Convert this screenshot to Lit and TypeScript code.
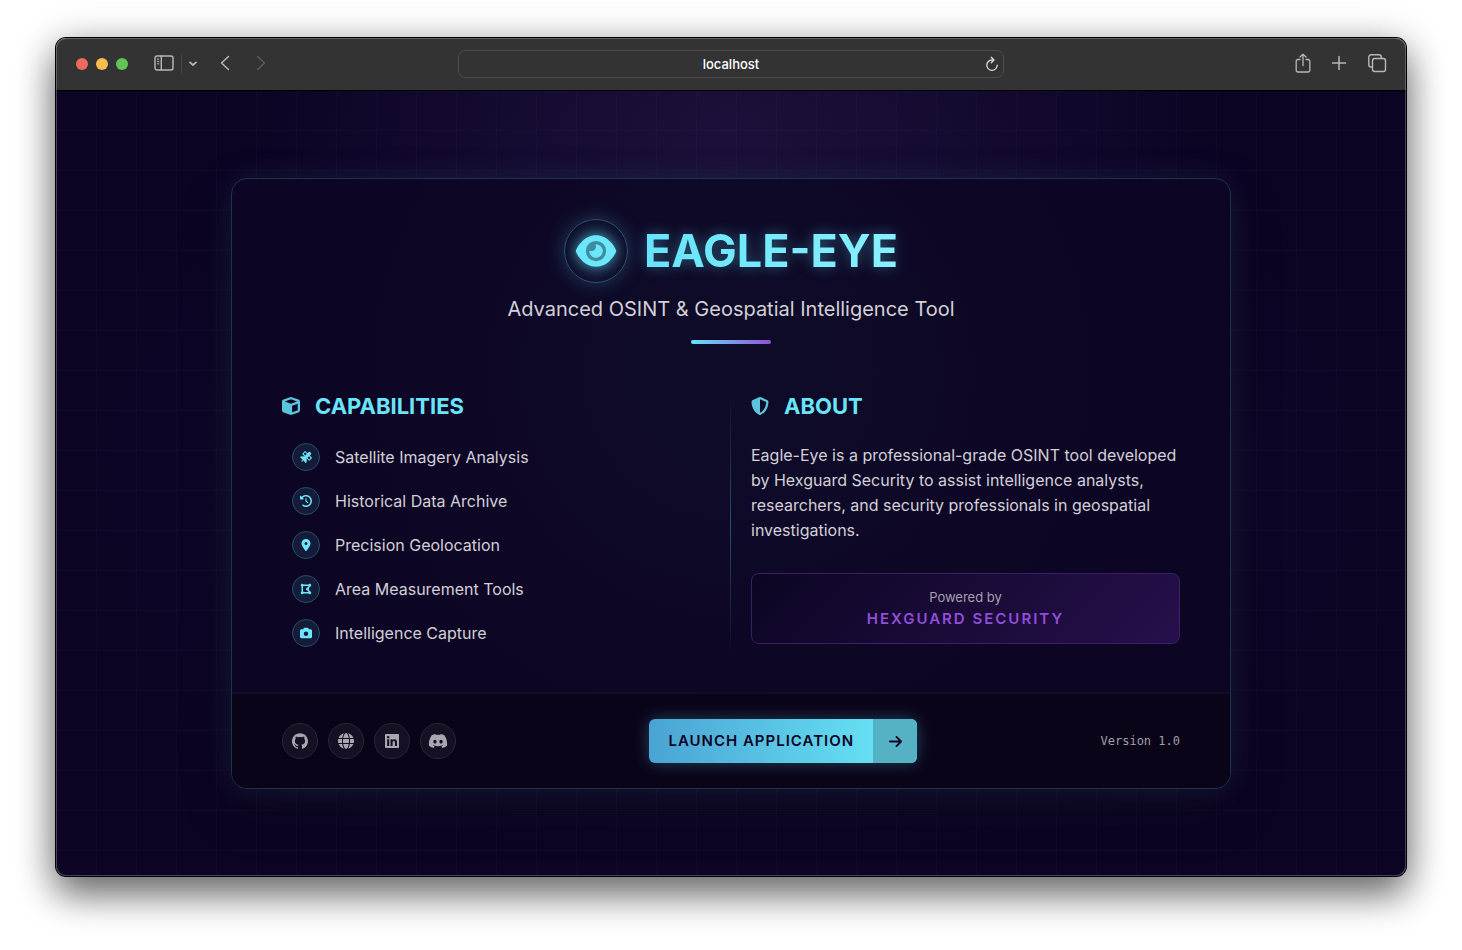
import { LitElement, html, css, svg } from "lit";
import { customElement, property } from "lit/decorators.js";

type Glyph = { box: string; path: string };

const ICONS: Record<string, Glyph> = {
  cube: {
    box: "0 0 512 512",
    path: "M234.5 5.7c13.9-5 29.1-5 43.1 0l192 68.6C495 83.4 512 107.5 512 134.6l0 242.9c0 27-17 51.2-42.5 60.3l-192 68.6c-13.9 5-29.1 5-43.1 0l-192-68.6C17 428.6 0 404.5 0 377.4L0 134.6c0-27 17-51.2 42.5-60.3l192-68.6zM256 66L82.3 128 256 190l173.7-62L256 66zm32 368.6l160-57.1 0-188L288 246.6l0 188z",
  },
  shield: {
    box: "0 0 512 512",
    path: "M256 0c4.6 0 9.2 1 13.4 2.9L457.7 82.8c22 9.3 38.4 31 38.3 57.2c-.5 99.2-41.3 280.7-213.6 363.2c-16.7 8-36.1 8-52.8 0C57.3 420.7 16.5 239.2 16 140c-.1-26.2 16.3-47.9 38.3-57.2L242.7 2.9C246.8 1 251.4 0 256 0zm0 66.8l0 378.1C394 378 431.1 230.1 432 141.4L256 66.8z",
  },
  satellite: {
    box: "0 0 512 512",
    path: "M233 7c-9.4-9.4-24.6-9.4-33.9 0l-96 96c-9.4 9.4-9.4 24.6 0 33.9l89.4 89.4-15.5 15.5C152.3 230.4 124.9 224 96 224c-31.7 0-61.5 7.7-87.8 21.2c-9 4.7-10.3 16.7-3.1 23.8L112.7 376.7 96.3 393.1c-2.6-.7-5.4-1.1-8.3-1.1c-17.7 0-32 14.3-32 32s14.3 32 32 32s32-14.3 32-32c0-2.9-.4-5.6-1.1-8.3l16.4-16.4L242.9 506.9c7.2 7.2 19.2 5.9 23.8-3.1C280.3 477.5 288 447.7 288 416c0-28.9-6.4-56.3-17.8-80.9l15.5-15.5L375 409c9.4 9.4 24.6 9.4 33.9 0l96-96c9.4-9.4 9.4-24.6 0-33.9l-89.4-89.4 55-55c12.5-12.5 12.5-32.8 0-45.3l-48-48c-12.5-12.5-32.8-12.5-45.3 0l-55 55L233 7zm159 351l-72.4-72.4 62.1-62.1L454.1 296 392 358.1zM226.3 192.4L153.9 120 216 57.9l72.4 72.4-62.1 62.1z",
  },
  history: {
    box: "0 0 512 512",
    path: "M75 75L41 41C25.9 25.9 0 36.6 0 57.9L0 168c0 13.3 10.7 24 24 24l110.1 0c21.4 0 32.1-25.9 17-41l-30.8-30.8C155 85.5 203 64 256 64c106 0 192 86 192 192s-86 192-192 192c-40.8 0-78.6-12.7-109.7-34.4c-14.5-10.1-34.4-6.6-44.6 7.9s-6.6 34.4 7.9 44.6C151.2 495 201.7 512 256 512c141.4 0 256-114.6 256-256S397.4 0 256 0C185.3 0 121.3 28.7 75 75zm181 53c-13.3 0-24 10.7-24 24l0 104c0 6.4 2.5 12.5 7 17l72 72c9.4 9.4 24.6 9.4 33.9 0s9.4-24.6 0-33.9l-65-65 0-94.1c0-13.3-10.7-24-24-24z",
  },
  pin: {
    box: "-64 0 512 512",
    path: "M215.7 499.2C267 435 384 279.4 384 192C384 86 298 0 192 0S0 86 0 192c0 87.4 117 243 168.3 307.2c12.3 15.3 35.1 15.3 47.4 0zM192 128a64 64 0 1 1 0 128 64 64 0 1 1 0-128z",
  },
  polygon: {
    box: "-32 0 512 512",
    path: "M96 151.4l0 209.1c9.7 5.6 17.8 13.7 23.4 23.4l209.1 0c0-.1 .1-.2 .1-.3l-4.5-7.9-32-56 0 0c-1.4 .1-2.8 .1-4.2 .1c-35.3 0-64-28.7-64-64s28.7-64 64-64c1.4 0 2.8 0 4.2 .1l0 0 32-56 4.5-7.9-.1-.3-209.1 0c-5.6 9.7-13.7 17.8-23.4 23.4zM384.3 352c35.2 .2 63.7 28.7 63.7 64c0 35.3-28.7 64-64 64c-23.7 0-44.4-12.9-55.4-32l-209.1 0c-11.1 19.1-31.7 32-55.4 32c-35.3 0-64-28.7-64-64c0-23.7 12.9-44.4 32-55.4l0-209.1C12.9 140.4 0 119.7 0 96C0 60.7 28.7 32 64 32c23.7 0 44.4 12.9 55.4 32l209.1 0c11.1-19.1 31.7-32 55.4-32c35.3 0 64 28.7 64 64c0 35.3-28.5 63.8-63.7 64l-4.5 7.9-32 56-2.3 4c4.2 8.5 6.5 18 6.5 28.1s-2.3 19.6-6.5 28.1l2.3 4 32 56 4.5 7.9z",
  },
  camera: {
    box: "0 0 512 512",
    path: "M149.1 64.8L138.7 96 64 96C28.7 96 0 124.7 0 160L0 416c0 35.3 28.7 64 64 64l384 0c35.3 0 64-28.7 64-64l0-256c0-35.3-28.7-64-64-64l-74.7 0L362.9 64.8C356.4 45.2 338.1 32 317.4 32L194.6 32c-20.7 0-39 13.2-45.5 32.8zM256 192a96 96 0 1 1 0 192 96 96 0 1 1 0-192z",
  },
  arrow: {
    box: "0 32 448 448",
    path: "M438.6 278.6c12.5-12.5 12.5-32.8 0-45.3l-160-160c-12.5-12.5-32.8-12.5-45.3 0s-12.5 32.8 0 45.3L338.8 224 32 224c-17.7 0-32 14.3-32 32s14.3 32 32 32l306.7 0L233.4 393.4c-12.5 12.5-12.5 32.8 0 45.3s32.8 12.5 45.3 0l160-160z",
  },
  github: {
    box: "0 0 24 24",
    path: "M12 .297c-6.63 0-12 5.373-12 12 0 5.303 3.438 9.8 8.205 11.385.6.113.82-.258.82-.577 0-.285-.01-1.04-.015-2.04-3.338.724-4.042-1.61-4.042-1.61C4.422 18.07 3.633 17.7 3.633 17.7c-1.087-.744.084-.729.084-.729 1.205.084 1.838 1.236 1.838 1.236 1.07 1.835 2.809 1.305 3.495.998.108-.776.417-1.305.76-1.605-2.665-.3-5.466-1.332-5.466-5.93 0-1.31.465-2.38 1.235-3.22-.135-.303-.54-1.523.105-3.176 0 0 1.005-.322 3.3 1.23.96-.267 1.98-.399 3-.405 1.02.006 2.04.138 3 .405 2.28-1.552 3.285-1.23 3.285-1.23.645 1.653.24 2.873.12 3.176.765.84 1.23 1.91 1.23 3.22 0 4.61-2.805 5.625-5.475 5.92.42.36.81 1.096.81 2.22 0 1.606-.015 2.896-.015 3.286 0 .315.21.69.825.57C20.565 22.092 24 17.592 24 12.297c0-6.627-5.373-12-12-12",
  },
  globe: {
    box: "0 0 512 512",
    path: "M352 256c0 22.2-1.2 43.6-3.3 64l-185.3 0c-2.2-20.4-3.3-41.8-3.3-64s1.2-43.6 3.3-64l185.3 0c2.2 20.4 3.3 41.8 3.3 64zm28.8-64l123.1 0c5.3 20.5 8.1 41.9 8.1 64s-2.8 43.5-8.1 64l-123.1 0c2.1-20.6 3.2-42 3.2-64s-1.1-43.4-3.2-64zm112.6-32l-116.7 0c-10-63.9-29.8-117.4-55.3-151.6c78.3 20.7 142 77.5 171.9 151.6zm-149.1 0l-176.6 0c6.1-36.4 15.5-68.6 27-94.7c10.5-23.6 22.2-40.7 33.5-51.5C239.4 3.2 248.7 0 256 0s16.6 3.2 27.8 13.8c11.3 10.8 23 27.9 33.5 51.5c11.6 26 20.9 58.2 27 94.7zm-209 0L18.6 160C48.6 85.9 112.2 29.1 190.6 8.4C165.1 42.6 145.3 96.1 135.3 160zM8.1 192l123.1 0c-2.1 20.6-3.2 42-3.2 64s1.1 43.4 3.2 64L8.1 320C2.8 299.5 0 278.1 0 256s2.8-43.5 8.1-64zM194.7 446.6c-11.6-26-20.9-58.2-27-94.6l176.6 0c-6.1 36.4-15.5 68.6-27 94.6c-10.5 23.6-22.2 40.7-33.5 51.5C272.6 508.8 263.3 512 256 512s-16.6-3.2-27.8-13.8c-11.3-10.8-23-27.9-33.5-51.5zM135.3 352c10 63.9 29.8 117.4 55.3 151.6C112.2 482.9 48.6 426.1 18.6 352l116.7 0zm358.1 0c-30 74.1-93.6 130.9-171.9 151.6c25.5-34.2 45.2-87.7 55.3-151.6l116.7 0z",
  },
  linkedin: {
    box: "-32 0 512 512",
    path: "M416 32H31.9C14.3 32 0 46.5 0 64.3v383.4C0 465.5 14.3 480 31.9 480H416c17.6 0 32-14.5 32-32.3V64.3c0-17.8-14.4-32.3-32-32.3zM135.4 416H69V202.2h66.5V416zm-33.2-243c-21.3 0-38.5-17.3-38.5-38.5S80.9 96 102.2 96c21.2 0 38.5 17.3 38.5 38.5 0 21.3-17.2 38.5-38.5 38.5zm282.1 243h-66.4V312c0-24.8-.5-56.7-34.5-56.7-34.6 0-39.9 27-39.9 54.9V416h-66.4V202.2h63.7v29.2h.9c8.9-16.8 30.6-34.5 62.9-34.5 67.2 0 79.7 44.3 79.7 101.9V416z",
  },
  discord: {
    box: "1.5 1.5 21 21",
    path: "M20.317 4.3698a19.7913 19.7913 0 00-4.8851-1.5152.0741.0741 0 00-.0785.0371c-.211.3753-.4447.8648-.6083 1.2495-1.8447-.2762-3.68-.2762-5.4868 0-.1636-.3933-.4058-.8742-.6177-1.2495a.077.077 0 00-.0785-.037 19.7363 19.7363 0 00-4.8852 1.515.0699.0699 0 00-.0321.0277C.5334 9.0458-.319 13.5799.0992 18.0578a.0824.0824 0 00.0312.0561c2.0528 1.5076 4.0413 2.4228 5.9929 3.0294a.0777.0777 0 00.0842-.0276c.4616-.6304.8731-1.2952 1.226-1.9942a.076.076 0 00-.0416-.1057c-.6528-.2476-1.2743-.5495-1.8722-.8923a.077.077 0 01-.0076-.1277c.1258-.0943.2517-.1923.3718-.2914a.0743.0743 0 01.0776-.0105c3.9278 1.7933 8.18 1.7933 12.0614 0a.0739.0739 0 01.0785.0095c.1202.099.246.1981.3728.2924a.077.077 0 01-.0066.1276 12.2986 12.2986 0 01-1.873.8914.0766.0766 0 00-.0407.1067c.3604.698.7719 1.3628 1.225 1.9932a.076.076 0 00.0842.0286c1.961-.6067 3.9495-1.5219 6.0023-3.0294a.077.077 0 00.0313-.0552c.5004-5.177-.8382-9.6739-3.5485-13.6604a.061.061 0 00-.0312-.0286zM8.02 15.3312c-1.1825 0-2.1569-1.0857-2.1569-2.419 0-1.3332.9555-2.4189 2.157-2.4189 1.2108 0 2.1757 1.0952 2.1568 2.419 0 1.3332-.9555 2.4189-2.1569 2.4189zm7.9748 0c-1.1825 0-2.1569-1.0857-2.1569-2.419 0-1.3332.9554-2.4189 2.1569-2.4189 1.2108 0 2.1757 1.0952 2.1568 2.419 0 1.3332-.946 2.4189-2.1568 2.4189Z",
  },
};

@customElement("ui-icon")
class UiIcon extends LitElement {
  @property() name = "cube";

  static styles = css`
    :host {
      display: block;
      width: 16px;
      height: 16px;
    }
    .glyph {
      display: block;
      width: 100%;
      height: 100%;
      fill: currentColor;
      overflow: visible;
    }
  `;

  render() {
    const icon = ICONS[this.name];
    return html`<svg class="glyph" viewBox=${icon.box} aria-hidden="true">
      ${svg`<path d=${icon.path}></path>`}
    </svg>`;
  }
}

@customElement("browser-toolbar")
class BrowserToolbar extends LitElement {
  static styles = css`
    :host {
      display: block;
      background: #333333;
      color: #b8b8b8;
    }
    .bar {
      display: grid;
      grid-template-columns: 1fr minmax(160px, 546px) 1fr;
      align-items: center;
      height: 52px;
      padding: 0 19px;
    }
    .side {
      display: flex;
      align-items: center;
    }
    .lights {
      display: flex;
      gap: 8px;
      margin: 0 26px 0 1px;
    }
    .light {
      width: 12px;
      height: 12px;
      border-radius: 50%;
    }
    .close {
      background: #ed6a5e;
    }
    .minimise {
      background: #f5bf4f;
    }
    .zoom {
      background: #61c554;
    }
    button {
      display: block;
      padding: 0;
      border: 0;
      background: none;
      color: inherit;
    }
    .side button {
      padding-bottom: 2px;
    }
    svg {
      display: block;
      fill: none;
      stroke: currentColor;
      stroke-linecap: round;
      stroke-linejoin: round;
    }
    .rule {
      width: 1px;
      height: 18px;
      margin: 0 7px;
      background: #474747;
    }
    .back {
      margin: 0 26px 0 23px;
    }
    .forward {
      color: #5d5d5d;
    }
    .address {
      display: flex;
      align-items: center;
      height: 26px;
      padding: 0 4px 0 18px;
      border: 1px solid #4c4c4c;
      border-radius: 7px;
      color: #dddddd;
    }
    .address input {
      flex: 1;
      min-width: 0;
      height: 26px;
      padding: 0;
      border: 0;
      outline: 0;
      background: none;
      color: #ffffff;
      font: 500 13px "Inter", sans-serif;
      text-align: center;
    }
    .end {
      justify-content: flex-end;
      gap: 20px;
    }
  `;

  render() {
    return html`<div class="bar">
      <div class="side">
        <div class="lights">
          <span class="light close"></span>
          <span class="light minimise"></span>
          <span class="light zoom"></span>
        </div>
        <button aria-label="Sidebar">
          <svg width="20" height="16" viewBox="0 0 20 16" stroke-width="1.4">
            <rect x="1" y="1" width="18" height="14" rx="2"></rect>
            <path d="M7.3 1v14"></path>
            <path d="M3.3 4h1.6M3.3 6.4h1.6M3.3 8.8h1.6" stroke-width="1"></path>
          </svg>
        </button>
        <span class="rule"></span>
        <button aria-label="Tab groups">
          <svg width="8" height="6" viewBox="0 0 8 6" stroke-width="1.7">
            <path d="M1 2.4l3 2.6 3-2.6"></path>
          </svg>
        </button>
        <button class="back" aria-label="Back">
          <svg width="10" height="16" viewBox="0 0 10 16" stroke-width="1.5">
            <path d="M8.5 1.500L1.500 8l7 6.500"></path>
          </svg>
        </button>
        <button class="forward" aria-label="Forward">
          <svg width="10" height="16" viewBox="0 0 10 16" stroke-width="1.5">
            <path d="M1.5 1.5l7 6.5-7 6.5"></path>
          </svg>
        </button>
      </div>
      <div class="address">
        <input type="text" aria-label="Address" .value=${"localhost"} />
        <button aria-label="Reload">
          <svg width="14" height="16" viewBox="0 0 14 16" stroke-width="1.3">
            <path d="M8.2 4H7a5.2 5.2 0 1 0 5.2 5.2"></path>
            <path d="M6.3 1.2L9 4 6.3 6.8"></path>
          </svg>
        </button>
      </div>
      <div class="side end">
        <button aria-label="Share">
          <svg width="16" height="20" viewBox="0 0 16 20" stroke-width="1.3">
            <path d="M5 6.5H3A1.7 1.7 0 0 0 1.2 8.2v9A1.7 1.7 0 0 0 3 19h10a1.7 1.7 0 0 0 1.8-1.8v-9A1.7 1.7 0 0 0 13 6.5h-2"></path>
            <path d="M8 12.5V1.3M5 4l3-2.9L11 4"></path>
          </svg>
        </button>
        <button aria-label="New tab">
          <svg width="16" height="16" viewBox="0 0 16 16" stroke-width="1.5">
            <path d="M8 1.5v13M1.5 8h13"></path>
          </svg>
        </button>
        <button aria-label="Tab overview">
          <svg width="20" height="20" viewBox="0 0 20 20" stroke-width="1.4">
            <rect x="5.5" y="5.5" width="13" height="13" rx="2.2"></rect>
            <path d="M5.5 14H4a2.2 2.2 0 0 1-2.2-2.2V4A2.2 2.2 0 0 1 4 1.8h8A2.2 2.2 0 0 1 14.2 4v1.5"></path>
          </svg>
        </button>
      </div>
    </div>`;
  }
}

const CAPABILITIES = [
  { icon: "satellite", label: "Satellite Imagery Analysis" },
  { icon: "history", label: "Historical Data Archive" },
  { icon: "pin", label: "Precision Geolocation" },
  { icon: "polygon", label: "Area Measurement Tools" },
  { icon: "camera", label: "Intelligence Capture" },
];

const SOCIAL = [
  { icon: "github", label: "GitHub" },
  { icon: "globe", label: "Website" },
  { icon: "linkedin", label: "LinkedIn" },
  { icon: "discord", label: "Discord" },
];

@customElement("welcome-card")
class WelcomeCard extends LitElement {
  static styles = css`
    :host {
      display: block;
      box-sizing: border-box;
      width: 100%;
      max-width: 1000px;
      overflow: hidden;
      border: 1px solid #1c3350;
      border-radius: 16px;
      background: radial-gradient(
          circle at 50% 32%,
          rgba(20, 42, 62, 0.2),
          rgba(20, 30, 60, 0) 380px
        ),
        #0d0524;
      box-shadow: 0 0 30px rgba(85, 215, 240, 0.1), 0 20px 50px rgba(12, 12, 16, 0.3);
      font-family: "Inter", sans-serif;
      color: #d3d0d8;
    }
    h1,
    h2,
    p,
    ul {
      margin: 0;
      padding: 0;
    }
    header {
      display: flex;
      flex-direction: column;
      align-items: center;
      padding: 40px 50px 0;
    }
    .brand {
      display: flex;
      align-items: center;
      gap: 16px;
    }
    .emblem {
      display: grid;
      place-items: center;
      box-sizing: border-box;
      width: 64px;
      height: 64px;
      border: 1px solid #2c5670;
      border-radius: 50%;
      background: radial-gradient(circle, rgba(80, 210, 235, 0.3), rgba(80, 210, 235, 0.03) 70%);
      box-shadow: 0 0 20px rgba(90, 220, 245, 0.25);
    }
    .eye {
      display: block;
      width: 42px;
      height: 36px;
      fill: #6be6fb;
      filter: drop-shadow(0 0 6px rgba(90, 220, 245, 0.6));
    }
    .iris {
      fill: #3f8ba0;
    }
    h1 {
      font-size: 45px;
      line-height: 54px;
      font-weight: 700;
      background: linear-gradient(90deg, #67e4fa, #88f1ff);
      -webkit-background-clip: text;
      background-clip: text;
      color: transparent;
      filter: drop-shadow(0 0 7px rgba(90, 220, 245, 0.4));
    }
    .tagline {
      margin-top: 12px;
      font-size: 20px;
      line-height: 28px;
      text-align: center;
    }
    .accent {
      width: 80px;
      height: 4px;
      margin-top: 17px;
      border-radius: 2px;
      background: linear-gradient(90deg, #66e5fa, #944fd9);
    }
    .columns {
      display: grid;
      grid-template-columns: 1fr 20px 1fr;
      column-gap: 10px;
      padding: 48px 50px 35px;
    }
    h2 {
      display: flex;
      align-items: center;
      gap: 15px;
      font-size: 22px;
      line-height: 28px;
      font-weight: 700;
      color: #69e5fa;
    }
    h2 ui-icon {
      width: 18px;
      height: 18px;
      opacity: 0.85;
    }
    .list {
      display: grid;
      gap: 16px;
      margin: 23px 0 10px 10px;
      list-style: none;
    }
    .item {
      display: flex;
      align-items: center;
      gap: 15px;
      font-size: 16px;
      line-height: 24px;
    }
    .badge {
      display: grid;
      place-items: center;
      box-sizing: border-box;
      width: 28px;
      height: 28px;
      border: 1px solid #28506a;
      border-radius: 50%;
      background: #141c3a;
      color: #6be6fb;
    }
    .badge ui-icon {
      width: 12px;
      height: 12px;
    }
    .divider {
      width: 1px;
      margin-left: 9px;
      background: linear-gradient(rgba(70, 190, 215, 0), rgba(70, 190, 215, 0.4), rgba(70, 190, 215, 0));
    }
    .copy {
      margin-top: 23px;
      font-size: 16px;
      line-height: 25px;
    }
    .powered {
      margin-top: 30px;
      padding: 13px 16px 12px;
      border: 1px solid #3b2068;
      border-radius: 8px;
      background: linear-gradient(135deg, #0d0523, #26104c);
      text-align: center;
    }
    .small {
      font-size: 13px;
      line-height: 20px;
      color: #a6a1ae;
    }
    .company {
      font-size: 15px;
      line-height: 24px;
      font-weight: 600;
      letter-spacing: 2px;
      color: #924ed8;
    }
    footer {
      display: flex;
      align-items: center;
      justify-content: space-between;
      padding: 25px 50px;
      border-top: 2px solid #100c2a;
      background: #0a0419;
    }
    .social {
      display: flex;
      gap: 10px;
      padding-right: 10px;
    }
    .social a {
      display: grid;
      place-items: center;
      box-sizing: border-box;
      width: 36px;
      height: 36px;
      border: 1px solid #2c2636;
      border-radius: 50%;
      background: #170f24;
      color: #aaa6b0;
    }
    .social a:last-child ui-icon {
      width: 18px;
    }
    .launch {
      display: flex;
      height: 44px;
      padding: 0;
      overflow: hidden;
      border: 0;
      border-radius: 6px;
      background: linear-gradient(90deg, #4aa3d3, #65dff3 84%);
      box-shadow: 0 0 16px rgba(90, 215, 240, 0.3);
      color: #0d0523;
      font: 600 15px "Inter", sans-serif;
      letter-spacing: 1px;
    }
    .label {
      padding: 0 19px;
      line-height: 44px;
    }
    .go {
      display: grid;
      place-items: center;
      width: 44px;
      height: 44px;
      background: #54b2c4;
    }
    .go ui-icon {
      width: 13px;
      height: 13px;
    }
    .version {
      font-family: "DejaVu Sans Mono", monospace;
      font-size: 12px;
      color: #a29eaa;
    }
  `;

  render() {
    return html`
      <header>
        <div class="brand">
          <div class="emblem">
            <svg class="eye" viewBox="0 0 576 512" aria-hidden="true">
              <circle class="iris" cx="288" cy="256" r="150"></circle>
              <path
                d="M288 32c-80.8 0-145.5 36.8-192.6 80.6C48.6 156 17.3 208 2.5 243.7c-3.3 7.9-3.3 16.7 0 24.6C17.3 304 48.6 356 95.4 399.4C142.5 443.2 207.2 480 288 480s145.5-36.8 192.6-80.6c46.8-43.5 78.1-95.4 93-131.1c3.3-7.9 3.3-16.7 0-24.6c-14.9-35.7-46.2-87.7-93-131.1C433.5 68.8 368.8 32 288 32zM144 256a144 144 0 1 1 288 0 144 144 0 1 1 -288 0zm144-64c0 35.3-28.7 64-64 64c-7.1 0-13.9-1.2-20.3-3.3c-5.5-1.8-11.9 1.6-11.7 7.4c.3 6.9 1.3 13.8 3.2 20.7c13.7 51.2 66.4 81.6 117.6 67.9s81.6-66.4 67.9-117.6c-11.1-41.5-47.8-69.4-88.6-71.1c-5.8-.2-9.2 6.1-7.4 11.7c2.1 6.4 3.3 13.2 3.3 20.3z"
              ></path>
            </svg>
          </div>
          <h1>EAGLE-EYE</h1>
        </div>
        <p class="tagline">Advanced OSINT &amp; Geospatial Intelligence Tool</p>
        <div class="accent"></div>
      </header>
      <div class="columns">
        <section>
          <h2><ui-icon name="cube"></ui-icon>CAPABILITIES</h2>
          <ul class="list">
            ${CAPABILITIES.map(
              (c) => html`<li class="item">
                <span class="badge"><ui-icon name=${c.icon}></ui-icon></span>${c.label}
              </li>`
            )}
          </ul>
        </section>
        <div class="divider"></div>
        <section>
          <h2><ui-icon name="shield"></ui-icon>ABOUT</h2>
          <p class="copy">
            Eagle-Eye is a professional-grade OSINT tool developed by Hexguard Security to assist
            intelligence analysts, researchers, and security professionals in geospatial
            investigations.
          </p>
          <div class="powered">
            <p class="small">Powered by</p>
            <p class="company">HEXGUARD SECURITY</p>
          </div>
        </section>
      </div>
      <footer>
        <nav class="social">
          ${SOCIAL.map(
            (s) => html`<a href="#" aria-label=${s.label}><ui-icon name=${s.icon}></ui-icon></a>`
          )}
        </nav>
        <button class="launch">
          <span class="label">LAUNCH APPLICATION</span>
          <span class="go"><ui-icon name="arrow"></ui-icon></span>
        </button>
        <span class="version">Version 1.0</span>
      </footer>
    `;
  }
}

@customElement("app-root")
class AppRoot extends LitElement {
  static styles = css`
    :host {
      display: flex;
      box-sizing: border-box;
      min-height: 100vh;
      padding: 38px 56px 74px;
      overflow: hidden;
      background: #ffffff;
    }
    .window {
      position: relative;
      display: flex;
      flex: 1;
      flex-direction: column;
      min-width: 0;
      border-radius: 10px;
      box-shadow: 0 0 0 1px #000000, 0 20px 36px rgba(0, 0, 0, 0.45), 0 6px 40px rgba(0, 0, 0, 0.32);
    }
    .window::after {
      content: "";
      position: absolute;
      inset: 0;
      border-radius: 10px;
      box-shadow: inset 0 0 0 1px rgba(255, 255, 255, 0.24);
      pointer-events: none;
    }
    browser-toolbar {
      border-radius: 10px 10px 0 0;
    }
    .page {
      display: flex;
      flex: 1;
      align-items: center;
      justify-content: center;
      padding: 40px 24px;
      border-top: 1px solid #000000;
      border-radius: 0 0 10px 10px;
      background-color: #0e0526;
      background-image: linear-gradient(rgba(80, 190, 220, 0.03) 1px, transparent 1px),
        linear-gradient(90deg, rgba(80, 190, 220, 0.03) 1px, transparent 1px),
        radial-gradient(ellipse 36% 50% at 50% 5%, rgba(95, 65, 150, 0.18), rgba(95, 65, 150, 0)),
        radial-gradient(ellipse at 50% 50%, #110a2d, #0d0424 75%);
      background-size: 40px 40px, 40px 40px, auto, auto;
      background-origin: border-box;
    }
  `;

  render() {
    return html`<div class="window">
      <browser-toolbar></browser-toolbar>
      <main class="page"><welcome-card></welcome-card></main>
    </div>`;
  }
}
